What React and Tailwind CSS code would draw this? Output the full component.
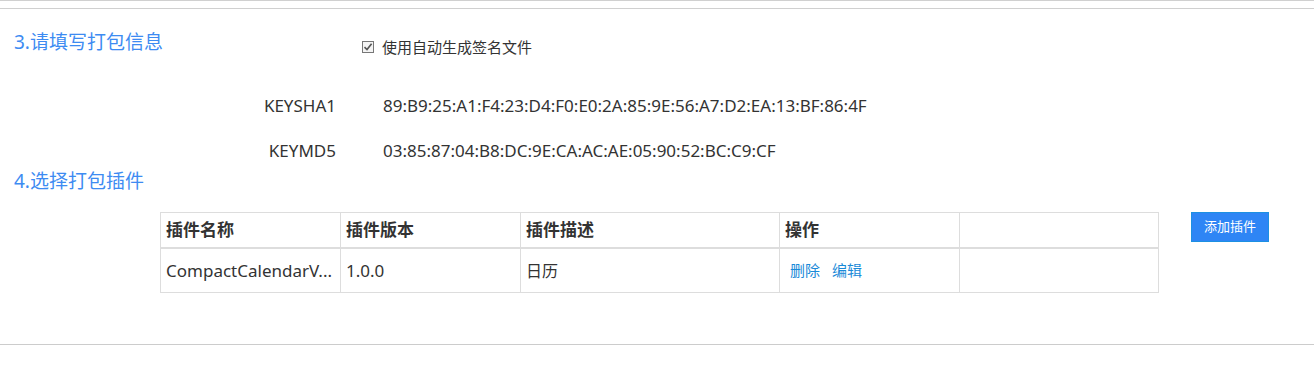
import React from "react";

export default function App() {
  return (
    <div className="w-[1314px] h-[373px] bg-white text-[#333]" style={{ fontFamily: '"Noto Sans", "Noto Sans CJK SC", sans-serif' }}>
      <div className="border-t border-[#d0d0d0]" />
      <div className="h-[7px]" />
      <div className="border-t border-[#d0d0d0]" />
      {/* Section 3 */}
      <div className="flex items-start pl-[14px] pt-[20px] h-[56px]">
        <div className="w-[348px] text-[19px] leading-[26px] text-[#3d8bf2]">3.请填写打包信息</div>
        <label className="flex items-center mt-[7px] text-[15px] leading-[22px] text-[#333]">
          <span className="w-[12px] h-[12px] border border-[#777] bg-[#f4f4f4] flex items-center justify-center mr-[8px]">
            <svg width="10" height="10" viewBox="0 0 10 10">
              <path d="M1.5 5.2 L4 7.6 L8.6 1.8" stroke="#555" strokeWidth="1.6" fill="none" />
            </svg>
          </span>
          使用自动生成签名文件
        </label>
      </div>
      <div className="flex items-center h-[24px] mt-[29px] text-[17px]">
        <div className="w-[336px] text-right">KEYSHA1</div>
        <div className="ml-[47px]">89:B9:25:A1:F4:23:D4:F0:E0:2A:85:9E:56:A7:D2:EA:13:BF:86:4F</div>
      </div>
      <div className="flex items-center h-[24px] mt-[21px] text-[17px]">
        <div className="w-[336px] text-right">KEYMD5</div>
        <div className="ml-[47px]">03:85:87:04:B8:DC:9E:CA:AC:AE:05:90:52:BC:C9:CF</div>
      </div>
      <div className="pl-[14px] mt-[5px] text-[19px] leading-[26px] text-[#3d8bf2]">4.选择打包插件</div>
      <div className="flex items-start mt-[18px]">
        <div className="ml-[160px] w-[999px] border border-[#ddd] text-[17px]">
          <div className="grid grid-cols-[180px_180px_259px_180px_198px] h-[36px] border-b-2 border-[#ddd] font-bold text-[17px]">
            <div className="border-r border-[#ddd] pl-[5px] flex items-center">插件名称</div>
            <div className="border-r border-[#ddd] pl-[5px] flex items-center">插件版本</div>
            <div className="border-r border-[#ddd] pl-[5px] flex items-center">插件描述</div>
            <div className="border-r border-[#ddd] pl-[5px] flex items-center">操作</div>
            <div />
          </div>
          <div className="grid grid-cols-[180px_180px_259px_180px_198px] h-[43px]">
            <div className="border-r border-[#ddd] pl-[5px] flex items-center whitespace-nowrap overflow-hidden">CompactCalendarV...</div>
            <div className="border-r border-[#ddd] pl-[5px] flex items-center">1.0.0</div>
            <div className="border-r border-[#ddd] pl-[5px] flex items-center text-[16px]">日历</div>
            <div className="border-r border-[#ddd] pl-[10px] flex items-center text-[15px] text-[#1a8ad8] gap-[12px]">
              <span>删除</span>
              <span>编辑</span>
            </div>
            <div />
          </div>
        </div>
        <button className="ml-[32px] w-[78px] h-[30px] bg-[#2e85f5] border border-[#1d90e2] text-white text-[13px] flex items-center justify-center">
          添加插件
        </button>
      </div>
      <div className="mt-[51px] border-t border-[#ccc]" />
    </div>
  );
}
